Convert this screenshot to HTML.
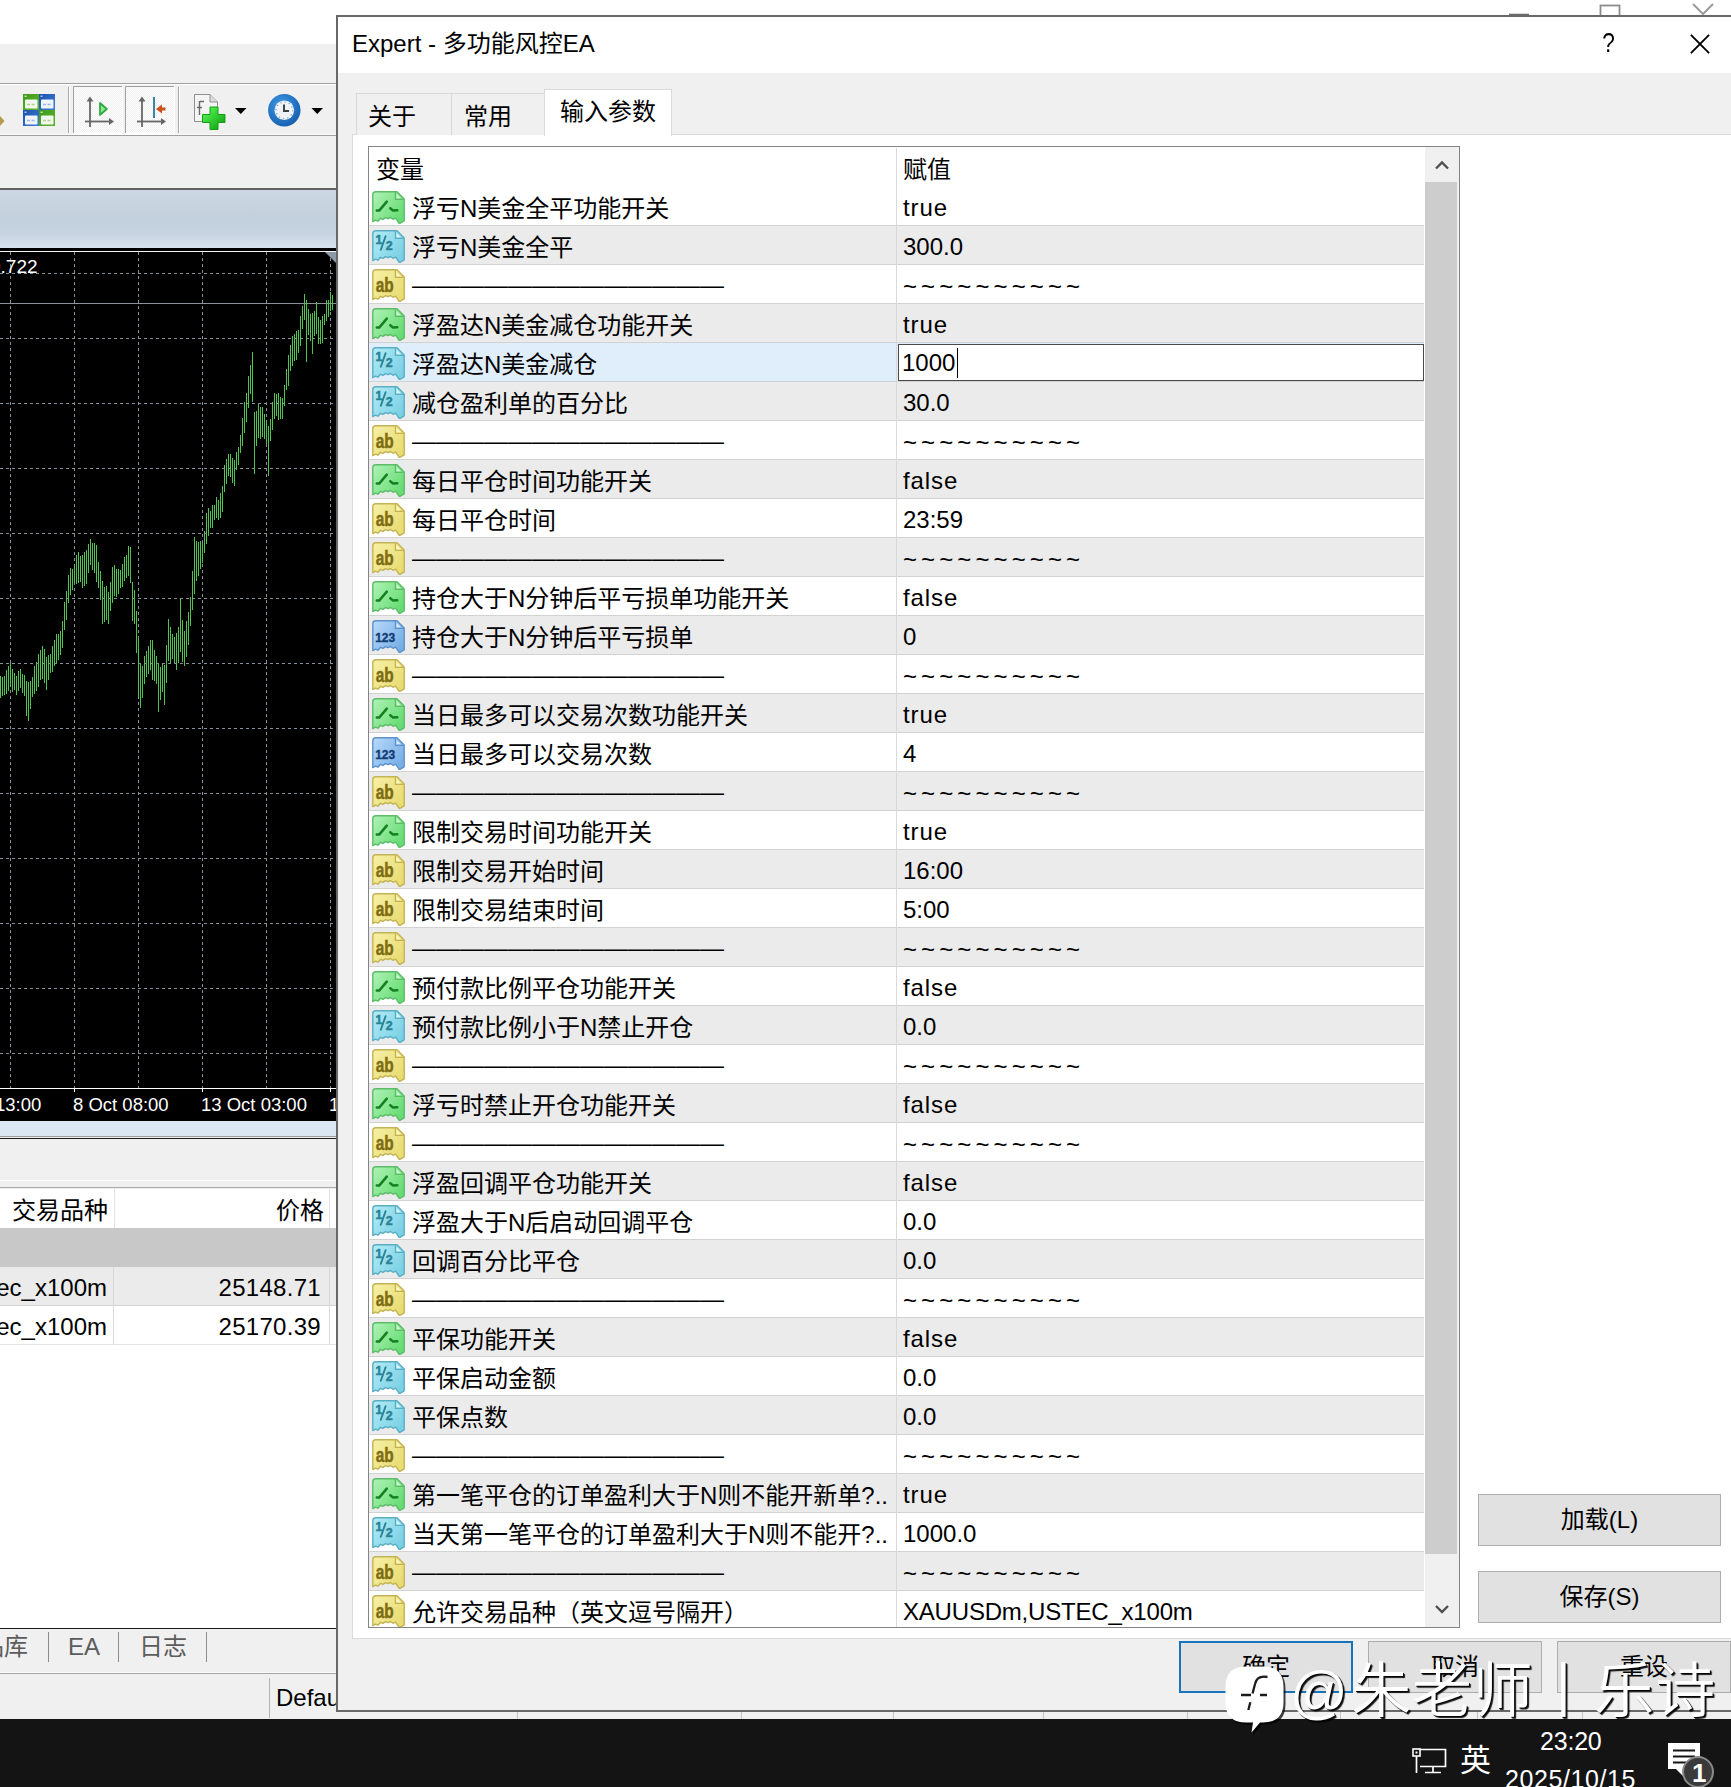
<!DOCTYPE html>
<html lang="zh-CN"><head><meta charset="utf-8"><title>Expert - 多功能风控EA</title>
<style>
html,body{margin:0;padding:0}
body{width:1731px;height:1787px;overflow:hidden;position:relative;background:#fff;font-family:"Liberation Sans","Noto Sans CJK SC",sans-serif;font-size:24px;color:#000;line-height:1}
div,span,svg{position:absolute;box-sizing:border-box}
.t{white-space:nowrap;line-height:36px;height:36px}
/* main window */
#mw-menu{left:0;top:44px;width:340px;height:1680px;background:#f0f0f0}
#tb-top{left:0;top:83px;width:340px;height:1px;background:#a0a0a0}
#tb-top2{left:0;top:84px;width:340px;height:1px;background:#fff}
#tb-bot{left:0;top:135px;width:340px;height:1px;background:#a0a0a0}
#tb-bot2{left:0;top:134px;width:340px;height:1px;background:#fdfdfd}
#ch-frame{left:0;top:188px;width:340px;height:2px;background:#626262}
#ch-cap{left:0;top:190px;width:340px;height:58px;background:linear-gradient(#ccd7e2,#c2d0dd 50%,#c6d3e0 75%,#d9e4ef)}
#chart{left:0;top:248px;width:340px;height:873px;background:#000;border-top:0}
#ch-strip{left:0;top:1121px;width:340px;height:15px;background:#dbe7f3}
#ch-bot{left:0;top:1136px;width:340px;height:3px;background:#f0f0f0;border-top:1px solid #9c9c9c;border-bottom:1px solid #1c1c1c}
#tbl-l1{left:0;top:1180px;width:340px;height:1px;background:#fbfbfb}
#tbl-l2{left:0;top:1187px;width:340px;height:1px;background:#a8a8a8}
#tbl-head{left:0;top:1189px;width:340px;height:39px;background:#fff}
#tbl-band{left:0;top:1228px;width:340px;height:39px;background:#c8c8c8}
#tbl-r1{left:0;top:1267px;width:340px;height:39px;background:#ebebeb;border-bottom:1px solid #d4d4d4}
#tbl-r2{left:0;top:1306px;width:340px;height:39px;background:#fff;border-bottom:1px solid #e4e4e4}
#tbl-rest{left:0;top:1345px;width:340px;height:283px;background:#fff}
#tbl-line{left:0;top:1628px;width:340px;height:1px;background:#1a1a1a}
#st-line{left:0;top:1673px;width:1731px;height:1px;background:#a6a6a6}
#st-line2{left:0;top:1672px;width:1731px;height:1px;background:#fbfbfb}
#status{left:0;top:1674px;width:1731px;height:46px;background:#f0f0f0}
#taskbar{left:0;top:1719px;width:1731px;height:68px;background:#141414;color:#fff}
.vsep{width:1px;background:#8c8c8c}
.gray{color:#5c5c5c}
/* dialog */
#dlg{left:336px;top:15px;width:1420px;height:1697px;background:#f0f0f0;border:2px solid #686868}
#dlg-title{left:0;top:0;width:1416px;height:56px;background:#fff}
#pane{left:14px;top:117px;width:1420px;height:1505px;background:#fff;border:1px solid #d9d9d9}
.tab{height:42px;top:76px;background:#f0f0f0;border:1px solid #d9d9d9;border-bottom:none}
#tab3{top:72px;height:47px;background:#fff;border:1px solid #d9d9d9;border-bottom:none}
#list{left:30px;top:129px;width:1092px;height:1482px;background:#fff;border:1px solid #848484;overflow:hidden}
.row{left:0;width:1055px;height:39px;border-bottom:1px solid #d2d2d2}
.row.g{background:#ebebeb}
.row.s{background:#e0eefb}
.row .n{left:43px;top:4px}
.row .v{left:534px;top:2.5px}
.row .v.tl{top:4px}
.row .w{letter-spacing:.9px}
.row .ic{left:3px;top:3.5px;width:33px;height:33.5px}
.tl{letter-spacing:4.1px}
#colsep{left:527px;top:1px;width:1px;height:1480px;background:#d9d9d9}
#sb{left:1056px;top:0;width:34px;height:1481px;background:#f0f0f0}
#sb-thumb{left:0;top:35px;width:32px;height:1372px;background:#cdcdcd}
.btn{background:#e1e1e1;border:1px solid #adadad;text-align:center;line-height:50px;height:52px;white-space:nowrap}
</style></head><body>

<svg style="left:1500px;top:0;width:231px;height:16px" viewBox="0 0 231 16"><path d="M9 14.5H29" stroke="#6e6e6e" stroke-width="1.6" fill="none"/><rect x="100.5" y="5.5" width="19" height="14" fill="none" stroke="#8c8c8c" stroke-width="1.8"/><path d="M193 4L203 14L213 4" stroke="#9c9c9c" stroke-width="2" fill="none"/></svg>
<div id="mw-menu"></div><div id="tb-top"></div><div id="tb-top2"></div><div id="tb-bot2"></div><div id="tb-bot"></div>
<svg id="toolbar" style="left:0;top:85px;width:340px;height:50px" viewBox="0 85 340 50">
<defs>
<linearGradient id="gg" x1="0" y1="0" x2="1" y2="1"><stop offset="0" stop-color="#3f9a1a"/><stop offset="1" stop-color="#5fb42e"/></linearGradient>
<linearGradient id="gb" x1="0" y1="0" x2="1" y2="1"><stop offset="0" stop-color="#1d4fae"/><stop offset="1" stop-color="#3f7fd6"/></linearGradient>
<radialGradient id="clk" cx="0.4" cy="0.35" r="0.8"><stop offset="0" stop-color="#3f9ae6"/><stop offset="1" stop-color="#0e55a6"/></radialGradient>
<linearGradient id="plus" x1="0" y1="0" x2="1" y2="1"><stop offset="0" stop-color="#5dff5d"/><stop offset="1" stop-color="#0a9a0a"/></linearGradient>
<pattern id="dith" width="2" height="2" patternUnits="userSpaceOnUse"><rect width="2" height="2" fill="#f0f0f0"/><rect width="1" height="1" fill="#fff"/><rect x="1" y="1" width="1" height="1" fill="#fff"/></pattern>
</defs>
<path d="M0 116L4.500 121L0 126Z" fill="#b89a4a"/>
<g>
<rect x="23" y="94" width="16" height="16" fill="url(#gg)"/><rect x="39" y="94" width="16" height="16" fill="url(#gb)"/>
<rect x="23" y="110" width="16" height="16" fill="url(#gb)"/><rect x="39" y="110" width="16" height="16" fill="url(#gg)"/>
<rect x="25" y="99.500" width="12.500" height="9" rx="1" fill="#f2f9ec"/><rect x="41" y="99.500" width="12.500" height="9" rx="1" fill="#eef3fc"/>
<rect x="25" y="115.500" width="12.500" height="9" rx="1" fill="#eef3fc"/><rect x="41" y="115.500" width="12.500" height="9" rx="1" fill="#f2f9ec"/>
<path d="M27 104.500h8.500M43 120.500h8.500" stroke="#a9d492" stroke-width="1.400" stroke-dasharray="3 1.500"/><path d="M43 104.500h8.500M27 120.500h8.500" stroke="#9ab8ea" stroke-width="1.400" stroke-dasharray="3 1.500"/>
<rect x="24.500" y="95.500" width="2" height="1.500" fill="#bfe6a8"/><rect x="40.500" y="95.500" width="2" height="1.500" fill="#a9c4f2"/><rect x="24.500" y="111.500" width="2" height="1.500" fill="#a9c4f2"/><rect x="40.500" y="111.500" width="2" height="1.500" fill="#bfe6a8"/>
</g>
<rect x="68" y="87" width="1" height="46" fill="#a8a8a8"/><rect x="69" y="87" width="1" height="46" fill="#fff"/>
<rect x="73" y="86" width="49" height="47" fill="url(#dith)"/><path d="M73.5 133V86.5H122" stroke="#a0a0a0" fill="none"/><path d="M73.5 133.5H122.5V86.5" stroke="#fff" fill="none"/>
<rect x="125" y="86" width="49" height="47" fill="url(#dith)"/><path d="M125.5 133V86.5H174" stroke="#a0a0a0" fill="none"/><path d="M125.5 133.5H174.5V86.5" stroke="#fff" fill="none"/>
<g stroke="#666" stroke-width="1.8" fill="none"><path d="M90 127V99"/><path d="M85 121.5H111"/></g>
<path d="M90 96.5l-3.5 5h7z M114 121.5l-5-3.5v7z" fill="#666"/>
<path d="M100 103v12l6.8-6z" fill="#8fe696" stroke="#2aa83a" stroke-width="1.7" stroke-linejoin="round"/>
<g stroke="#666" stroke-width="1.8" fill="none"><path d="M142 127V99"/><path d="M137 121.5H163"/></g>
<path d="M142 96.5l-3.5 5h7z M166 121.5l-5-3.5v7z" fill="#666"/>
<rect x="153" y="97" width="2" height="21" fill="#3b86a8"/>
<path d="M156 109l6-4.5v3h3.5v3H162v3z" fill="#c8501a"/>
<rect x="178" y="87" width="1" height="46" fill="#a8a8a8"/><rect x="179" y="87" width="1" height="46" fill="#fff"/>
<path d="M194.500 94.500H210L217.500 102V121.500H194.500Z" fill="#f4f4f4" stroke="#8f8f8f"/><path d="M210 94.500V102H217.500" fill="#dcdcdc" stroke="#8f8f8f"/>
<path d="M200 101.500h4M199.500 101v14M197 107.500h5" stroke="#6a6a6a" stroke-width="1.4" fill="none"/>
<path d="M210 107h8v7.500h7v8h-7v7h-8v-7h-7.500v-8h7.500z" fill="url(#plus)" stroke="#12a012" stroke-width="1"/>
<path d="M235 108h11.500l-5.750 6z" fill="#000"/>
<circle cx="284.300" cy="110.300" r="16.200" fill="url(#clk)"/><circle cx="284.300" cy="110.300" r="9.800" fill="#eef3f9"/>
<circle cx="284.300" cy="110.300" r="8.300" fill="none" stroke="#8ea6c4" stroke-width="1.400" stroke-dasharray="1.200 3.146"/>
<path d="M284 104.500v6.500h5" stroke="#3c3c3c" stroke-width="1.900" fill="none"/>
<path d="M311.500 108h11.500l-5.750 6z" fill="#000"/>
</svg>
<div id="ch-frame"></div><div id="ch-cap"></div><div id="chart"></div>
<svg style="left:0;top:249px;width:337px;height:872px" viewBox="0 249 337 872" shape-rendering="crispEdges"><path d="M0 273.5H336M0 338.5H336M0 403.5H336M0 468.5H336M0 533.5H336M0 598.5H336M0 663.5H336M0 728.5H336M0 793.5H336M0 858.5H336M0 923.5H336M0 988.5H336M0 1053.5H336M10.5 252V1088M74.5 252V1088M138.5 252V1088M202.5 252V1088M266.5 252V1088M330.5 252V1088" stroke="#87919c" stroke-width="1" stroke-dasharray="3 3" fill="none"/><path d="M0 303.500H336" stroke="#8c9197" stroke-width="1" fill="none"/><path d="M0 251.500H336" stroke="#f4f4f4" stroke-width="1" fill="none"/><path d="M0.5 676V698M2.5 677V696M4.5 676V695M6.5 670V694M8.5 666V691M10.5 663V686M12.5 669V692M14.5 673V690M16.5 676V695M18.5 671V691M20.5 669V688M22.5 674V693M24.5 675V696M26.5 681V716M28.5 682V721M30.5 681V709M32.5 677V697M34.5 666V694M36.5 662V691M38.5 654V687M40.5 650V680M42.5 646V679M44.5 649V683M46.5 657V690M48.5 655V680M50.5 654V673M52.5 646V672M54.5 640V666M56.5 634V663M58.5 634V660M60.5 631V655M62.5 621V648M64.5 602V630M66.5 591V620M68.5 575V603M70.5 568V595M72.5 569V590M74.5 565V583M76.5 555V584M78.5 552V583M80.5 556V582M82.5 555V588M84.5 552V586M86.5 550V584M88.5 544V573M90.5 539V565M92.5 543V570M94.5 543V573M96.5 545V582M98.5 562V588M100.5 571V600M102.5 581V624M104.5 587V622M106.5 586V620M108.5 592V624M110.5 582V611M112.5 567V603M114.5 565V596M116.5 569V597M118.5 569V594M120.5 570V588M122.5 564V587M124.5 557V581M126.5 555V578M128.5 546V576M130.5 547V583M132.5 582V621M134.5 590V624M136.5 611V653M138.5 639V699M140.5 664V708M142.5 666V698M144.5 656V684M146.5 651V677M148.5 646V674M150.5 640V670M152.5 640V680M154.5 650V681M156.5 656V684M158.5 664V712M160.5 667V700M162.5 664V692M164.5 665V705M166.5 645V683M168.5 619V661M170.5 627V663M172.5 634V659M174.5 637V663M176.5 633V670M178.5 627V663M180.5 599V652M182.5 620V662M184.5 631V666M186.5 621V657M188.5 612V645M190.5 597V626M192.5 571V610M194.5 537V594M196.5 541V581M198.5 542V576M200.5 541V569M202.5 543V563M204.5 531V553M206.5 513V544M208.5 508V536M210.5 511V528M212.5 505V528M214.5 505V520M216.5 497V518M218.5 500V520M220.5 493V518M222.5 486V512M224.5 465V492M226.5 459V484M228.5 454V476M230.5 454V477M232.5 458V483M234.5 460V486M236.5 452V470M238.5 447V465M240.5 435V453M242.5 418V446M244.5 402V433M246.5 393V422M248.5 376V408M250.5 365V394M252.5 352V402M254.5 412V474M256.5 411V446M258.5 404V438M260.5 407V439M262.5 407V437M264.5 414V439M266.5 420V444M268.5 426V476M270.5 419V441M272.5 402V430M274.5 393V419M276.5 394V416M278.5 393V420M280.5 397V419M282.5 398V419M284.5 385V406M286.5 369V390M288.5 355V386M290.5 345V371M292.5 336V366M294.5 334V361M296.5 331V360M298.5 330V353M300.5 316V346M302.5 306V329M304.5 294V320M306.5 300V362M308.5 309V335M310.5 314V341M312.5 313V354M314.5 311V336M316.5 302V334M318.5 317V344M320.5 320V344M322.5 316V343M324.5 314V325M326.5 300V321M328.5 300V317M330.5 292V311M332.5 295V310" stroke="#4fc44f" stroke-width="1" fill="none"/><path d="M0 1088.500H336M74.500 1088V1092M202.500 1088V1092M330.500 1088V1092" stroke="#fff" stroke-width="1" fill="none"/><path d="M325 252H336V263Z" fill="#8e9aa8" shape-rendering="auto"/><g fill="#fff" font-size="18.500" font-family="'Liberation Sans',sans-serif" shape-rendering="auto"><text x="-10" y="272.500" font-size="19">0.722</text><text x="-5" y="1111">13:00</text><text x="73" y="1111">8 Oct 08:00</text><text x="201" y="1111">13 Oct 03:00</text><text x="329" y="1111">15</text></g></svg>
<div id="ch-strip"></div><div id="ch-bot"></div>
<div id="tbl-l1"></div><div id="tbl-l2"></div><div id="tbl-head"></div><div id="tbl-band"></div><div id="tbl-r1"></div><div id="tbl-r2"></div><div id="tbl-rest"></div><div id="tbl-line"></div>
<div class="vsep" style="left:114px;top:1189px;height:39px;background:#e2e2e2"></div><div class="vsep" style="left:329px;top:1189px;height:39px;background:#e2e2e2"></div><div class="vsep" style="left:113px;top:1267px;height:78px;background:#d8d8d8"></div><div class="vsep" style="left:329px;top:1267px;height:78px;background:#d8d8d8"></div>
<div class="t" style="left:12px;top:1193px">交易品种</div><div class="t" style="left:276px;top:1193px">价格</div>
<div class="t" style="right:1624px;top:1270px">ec_x100m</div><div class="t" style="right:1410px;top:1270px;letter-spacing:.3px">25148.71</div>
<div class="t" style="right:1624px;top:1309px">ec_x100m</div><div class="t" style="right:1410px;top:1309px;letter-spacing:.3px">25170.39</div>
<div class="t gray" style="left:-20px;top:1629px">品库</div><div class="vsep" style="left:48px;top:1632px;height:30px"></div><div class="t gray" style="left:68px;top:1629px">EA</div><div class="vsep" style="left:118px;top:1632px;height:30px"></div><div class="t gray" style="left:139px;top:1629px">日志</div><div class="vsep" style="left:206px;top:1632px;height:30px"></div>
<div id="st-line2"></div><div id="st-line"></div><div id="status"></div><div class="vsep" style="left:269px;top:1678px;height:40px;background:#b4b4b4"></div><div class="t" style="left:276px;top:1680px">Default</div>
<div class="vsep" style="left:517px;top:1712px;height:7px;background:#c4c4c4"></div>
<div class="vsep" style="left:741px;top:1712px;height:7px;background:#c4c4c4"></div>
<div class="vsep" style="left:893px;top:1712px;height:7px;background:#c4c4c4"></div>
<div class="vsep" style="left:1043px;top:1712px;height:7px;background:#c4c4c4"></div>
<div class="vsep" style="left:1187px;top:1712px;height:7px;background:#c4c4c4"></div>
<div class="vsep" style="left:1340px;top:1712px;height:7px;background:#c4c4c4"></div>
<div class="vsep" style="left:1477px;top:1712px;height:7px;background:#c4c4c4"></div>
<div class="vsep" style="left:1582px;top:1712px;height:7px;background:#c4c4c4"></div>
<div id="dlg">
<div id="dlg-title"></div><div class="t" style="left:14px;top:9px">Expert - 多功能风控EA</div>
<div class="t" style="left:1263px;top:8px;font-size:27px;transform:scaleX(.84)">?</div>
<svg style="left:1352px;top:16.5px;width:20px;height:20px" viewBox="0 0 22 22"><path d="M1 1L21 21M21 1L1 21" stroke="#000" stroke-width="2.1" fill="none"/></svg>
<div id="pane"></div>
<div class="tab" style="left:18px;width:96px"></div><div class="tab" style="left:113px;width:94px"></div><div id="tab3" style="left:206px;width:128px"></div>
<div class="t" style="left:30px;top:82px">关于</div><div class="t" style="left:126px;top:82px">常用</div><div class="t" style="left:222px;top:77px">输入参数</div>
<div id="list">
<div class="t" style="left:7px;top:5px">变量</div><div class="t" style="left:534px;top:5px">赋值</div>
<div class="row" style="top:40px"><svg class="ic" viewBox="0 0 33 33.500"><defs><linearGradient id="g0" x1="0" y1="0" x2="1" y2="0.700"><stop offset="0" stop-color="#b0f2b6"/><stop offset="1" stop-color="#66dc74"/></linearGradient></defs><path d="M3.8 .8H25L32.200 8V29.800L27.400 32.700L23.600 27.200L21 28.300L18.500 26.500L16 27.700L13.500 26.600L11 28.400L8.500 27.300L6 30.200L3.500 29.200L.8 30.600V3.800Q.8 .8 3.8 .8Z" fill="url(#g0)" stroke="#5cbc68" stroke-width="1.400" stroke-linejoin="round"/><path d="M23.400 1V8.400H32" fill="none" stroke="#5cbc68" stroke-width="1.200"/><path d="M24.600 3V7.300H28.800Z" fill="#d2f8d4"/><path d="M4.800 19.600H7.200L14.800 10.600M18.300 17.200L20.800 19.400L25.300 19.200" stroke="#14801f" stroke-width="2.500" fill="none" stroke-linecap="round" stroke-linejoin="round"/></svg><div class="t n">浮亏N美金全平功能开关</div><div class="t v w">true</div></div>
<div class="row g" style="top:79px"><svg class="ic" viewBox="0 0 33 33.500"><defs><linearGradient id="g1" x1="0" y1="0" x2="1" y2="0.700"><stop offset="0" stop-color="#b4ecf6"/><stop offset="1" stop-color="#7ad0e4"/></linearGradient></defs><path d="M3.8 .8H25L32.200 8V29.800L27.400 32.700L23.600 27.200L21 28.300L18.500 26.500L16 27.700L13.500 26.600L11 28.400L8.500 27.300L6 30.200L3.500 29.200L.8 30.600V3.800Q.8 .8 3.8 .8Z" fill="url(#g1)" stroke="#5aaec4" stroke-width="1.400" stroke-linejoin="round"/><path d="M23.400 1V8.400H32" fill="none" stroke="#5aaec4" stroke-width="1.200"/><path d="M24.600 3V7.300H28.800Z" fill="#dcf6fa"/><text font-size="12" font-weight="bold" fill="#2a8296" stroke="#2a8296" stroke-width=".5" font-family="'Liberation Sans',sans-serif"><tspan x="3.600" y="14.300">1</tspan><tspan x="13.800" y="20.200" font-size="12.400">2</tspan></text><path d="M13.600 6.200L8.800 19.800" stroke="#2a8296" stroke-width="1.900" stroke-linecap="round"/></svg><div class="t n">浮亏N美金全平</div><div class="t v">300.0</div></div>
<div class="row" style="top:118px"><svg class="ic" viewBox="0 0 33 33.500"><defs><linearGradient id="g2" x1="0" y1="0" x2="1" y2="0.700"><stop offset="0" stop-color="#f7f0a8"/><stop offset="1" stop-color="#e9dc72"/></linearGradient></defs><path d="M3.8 .8H25L32.200 8V29.800L27.400 32.700L23.600 27.200L21 28.300L18.500 26.500L16 27.700L13.500 26.600L11 28.400L8.500 27.300L6 30.200L3.500 29.200L.8 30.600V3.800Q.8 .8 3.8 .8Z" fill="url(#g2)" stroke="#c4b352" stroke-width="1.400" stroke-linejoin="round"/><path d="M23.400 1V8.400H32" fill="none" stroke="#c4b352" stroke-width="1.200"/><path d="M24.600 3V7.300H28.800Z" fill="#fbf6cc"/><text x="3.800" y="22.600" font-size="20" font-weight="bold" fill="#7d6c12" stroke="#7d6c12" stroke-width=".45" font-family="'Liberation Sans',sans-serif" textLength="18" lengthAdjust="spacingAndGlyphs">ab</text></svg><div class="t n"><span style="position:relative;top:-2px">—————————————</span></div><div class="t v tl">~~~~~~~~~~</div></div>
<div class="row g" style="top:157px"><svg class="ic" viewBox="0 0 33 33.500"><defs><linearGradient id="g3" x1="0" y1="0" x2="1" y2="0.700"><stop offset="0" stop-color="#b0f2b6"/><stop offset="1" stop-color="#66dc74"/></linearGradient></defs><path d="M3.8 .8H25L32.200 8V29.800L27.400 32.700L23.600 27.200L21 28.300L18.500 26.500L16 27.700L13.500 26.600L11 28.400L8.500 27.300L6 30.200L3.500 29.200L.8 30.600V3.800Q.8 .8 3.8 .8Z" fill="url(#g3)" stroke="#5cbc68" stroke-width="1.400" stroke-linejoin="round"/><path d="M23.400 1V8.400H32" fill="none" stroke="#5cbc68" stroke-width="1.200"/><path d="M24.600 3V7.300H28.800Z" fill="#d2f8d4"/><path d="M4.800 19.600H7.200L14.800 10.600M18.300 17.200L20.800 19.400L25.300 19.200" stroke="#14801f" stroke-width="2.500" fill="none" stroke-linecap="round" stroke-linejoin="round"/></svg><div class="t n">浮盈达N美金减仓功能开关</div><div class="t v w">true</div></div>
<div class="row s" style="top:196px"><svg class="ic" viewBox="0 0 33 33.500"><defs><linearGradient id="g4" x1="0" y1="0" x2="1" y2="0.700"><stop offset="0" stop-color="#b4ecf6"/><stop offset="1" stop-color="#7ad0e4"/></linearGradient></defs><path d="M3.8 .8H25L32.200 8V29.800L27.400 32.700L23.600 27.200L21 28.300L18.500 26.500L16 27.700L13.500 26.600L11 28.400L8.500 27.300L6 30.200L3.500 29.200L.8 30.600V3.800Q.8 .8 3.8 .8Z" fill="url(#g4)" stroke="#5aaec4" stroke-width="1.400" stroke-linejoin="round"/><path d="M23.400 1V8.400H32" fill="none" stroke="#5aaec4" stroke-width="1.200"/><path d="M24.600 3V7.300H28.800Z" fill="#dcf6fa"/><text font-size="12" font-weight="bold" fill="#2a8296" stroke="#2a8296" stroke-width=".5" font-family="'Liberation Sans',sans-serif"><tspan x="3.600" y="14.300">1</tspan><tspan x="13.800" y="20.200" font-size="12.400">2</tspan></text><path d="M13.600 6.200L8.800 19.800" stroke="#2a8296" stroke-width="1.900" stroke-linecap="round"/></svg><div class="t n">浮盈达N美金减仓</div><div style="left:529px;top:1px;width:526px;height:37px;background:#fff;border:1px solid #4a4a4a"></div><div class="t" style="left:533px;top:1.5px">1000</div><div style="left:588px;top:5px;width:1px;height:30px;background:#000"></div></div>
<div class="row g" style="top:235px"><svg class="ic" viewBox="0 0 33 33.500"><defs><linearGradient id="g5" x1="0" y1="0" x2="1" y2="0.700"><stop offset="0" stop-color="#b4ecf6"/><stop offset="1" stop-color="#7ad0e4"/></linearGradient></defs><path d="M3.8 .8H25L32.200 8V29.800L27.400 32.700L23.600 27.200L21 28.300L18.500 26.500L16 27.700L13.500 26.600L11 28.400L8.500 27.300L6 30.200L3.500 29.200L.8 30.600V3.800Q.8 .8 3.8 .8Z" fill="url(#g5)" stroke="#5aaec4" stroke-width="1.400" stroke-linejoin="round"/><path d="M23.400 1V8.400H32" fill="none" stroke="#5aaec4" stroke-width="1.200"/><path d="M24.600 3V7.300H28.800Z" fill="#dcf6fa"/><text font-size="12" font-weight="bold" fill="#2a8296" stroke="#2a8296" stroke-width=".5" font-family="'Liberation Sans',sans-serif"><tspan x="3.600" y="14.300">1</tspan><tspan x="13.800" y="20.200" font-size="12.400">2</tspan></text><path d="M13.600 6.200L8.800 19.800" stroke="#2a8296" stroke-width="1.900" stroke-linecap="round"/></svg><div class="t n">减仓盈利单的百分比</div><div class="t v">30.0</div></div>
<div class="row" style="top:274px"><svg class="ic" viewBox="0 0 33 33.500"><defs><linearGradient id="g6" x1="0" y1="0" x2="1" y2="0.700"><stop offset="0" stop-color="#f7f0a8"/><stop offset="1" stop-color="#e9dc72"/></linearGradient></defs><path d="M3.8 .8H25L32.200 8V29.800L27.400 32.700L23.600 27.200L21 28.300L18.500 26.500L16 27.700L13.500 26.600L11 28.400L8.500 27.300L6 30.200L3.500 29.200L.8 30.600V3.800Q.8 .8 3.8 .8Z" fill="url(#g6)" stroke="#c4b352" stroke-width="1.400" stroke-linejoin="round"/><path d="M23.400 1V8.400H32" fill="none" stroke="#c4b352" stroke-width="1.200"/><path d="M24.600 3V7.300H28.800Z" fill="#fbf6cc"/><text x="3.800" y="22.600" font-size="20" font-weight="bold" fill="#7d6c12" stroke="#7d6c12" stroke-width=".45" font-family="'Liberation Sans',sans-serif" textLength="18" lengthAdjust="spacingAndGlyphs">ab</text></svg><div class="t n"><span style="position:relative;top:-2px">—————————————</span></div><div class="t v tl">~~~~~~~~~~</div></div>
<div class="row g" style="top:313px"><svg class="ic" viewBox="0 0 33 33.500"><defs><linearGradient id="g7" x1="0" y1="0" x2="1" y2="0.700"><stop offset="0" stop-color="#b0f2b6"/><stop offset="1" stop-color="#66dc74"/></linearGradient></defs><path d="M3.8 .8H25L32.200 8V29.800L27.400 32.700L23.600 27.200L21 28.300L18.500 26.500L16 27.700L13.500 26.600L11 28.400L8.500 27.300L6 30.200L3.500 29.200L.8 30.600V3.800Q.8 .8 3.8 .8Z" fill="url(#g7)" stroke="#5cbc68" stroke-width="1.400" stroke-linejoin="round"/><path d="M23.400 1V8.400H32" fill="none" stroke="#5cbc68" stroke-width="1.200"/><path d="M24.600 3V7.300H28.800Z" fill="#d2f8d4"/><path d="M4.800 19.600H7.200L14.800 10.600M18.300 17.200L20.800 19.400L25.300 19.200" stroke="#14801f" stroke-width="2.500" fill="none" stroke-linecap="round" stroke-linejoin="round"/></svg><div class="t n">每日平仓时间功能开关</div><div class="t v w">false</div></div>
<div class="row" style="top:352px"><svg class="ic" viewBox="0 0 33 33.500"><defs><linearGradient id="g8" x1="0" y1="0" x2="1" y2="0.700"><stop offset="0" stop-color="#f7f0a8"/><stop offset="1" stop-color="#e9dc72"/></linearGradient></defs><path d="M3.8 .8H25L32.200 8V29.800L27.400 32.700L23.600 27.200L21 28.300L18.500 26.500L16 27.700L13.500 26.600L11 28.400L8.500 27.300L6 30.200L3.500 29.200L.8 30.600V3.800Q.8 .8 3.8 .8Z" fill="url(#g8)" stroke="#c4b352" stroke-width="1.400" stroke-linejoin="round"/><path d="M23.400 1V8.400H32" fill="none" stroke="#c4b352" stroke-width="1.200"/><path d="M24.600 3V7.300H28.800Z" fill="#fbf6cc"/><text x="3.800" y="22.600" font-size="20" font-weight="bold" fill="#7d6c12" stroke="#7d6c12" stroke-width=".45" font-family="'Liberation Sans',sans-serif" textLength="18" lengthAdjust="spacingAndGlyphs">ab</text></svg><div class="t n">每日平仓时间</div><div class="t v">23:59</div></div>
<div class="row g" style="top:391px"><svg class="ic" viewBox="0 0 33 33.500"><defs><linearGradient id="g9" x1="0" y1="0" x2="1" y2="0.700"><stop offset="0" stop-color="#f7f0a8"/><stop offset="1" stop-color="#e9dc72"/></linearGradient></defs><path d="M3.8 .8H25L32.200 8V29.800L27.400 32.700L23.600 27.200L21 28.300L18.500 26.500L16 27.700L13.500 26.600L11 28.400L8.500 27.300L6 30.200L3.500 29.200L.8 30.600V3.800Q.8 .8 3.8 .8Z" fill="url(#g9)" stroke="#c4b352" stroke-width="1.400" stroke-linejoin="round"/><path d="M23.400 1V8.400H32" fill="none" stroke="#c4b352" stroke-width="1.200"/><path d="M24.600 3V7.300H28.800Z" fill="#fbf6cc"/><text x="3.800" y="22.600" font-size="20" font-weight="bold" fill="#7d6c12" stroke="#7d6c12" stroke-width=".45" font-family="'Liberation Sans',sans-serif" textLength="18" lengthAdjust="spacingAndGlyphs">ab</text></svg><div class="t n"><span style="position:relative;top:-2px">—————————————</span></div><div class="t v tl">~~~~~~~~~~</div></div>
<div class="row" style="top:430px"><svg class="ic" viewBox="0 0 33 33.500"><defs><linearGradient id="g10" x1="0" y1="0" x2="1" y2="0.700"><stop offset="0" stop-color="#b0f2b6"/><stop offset="1" stop-color="#66dc74"/></linearGradient></defs><path d="M3.8 .8H25L32.200 8V29.800L27.400 32.700L23.600 27.200L21 28.300L18.500 26.500L16 27.700L13.500 26.600L11 28.400L8.500 27.300L6 30.200L3.500 29.200L.8 30.600V3.800Q.8 .8 3.8 .8Z" fill="url(#g10)" stroke="#5cbc68" stroke-width="1.400" stroke-linejoin="round"/><path d="M23.400 1V8.400H32" fill="none" stroke="#5cbc68" stroke-width="1.200"/><path d="M24.600 3V7.300H28.800Z" fill="#d2f8d4"/><path d="M4.800 19.600H7.200L14.800 10.600M18.300 17.200L20.800 19.400L25.300 19.200" stroke="#14801f" stroke-width="2.500" fill="none" stroke-linecap="round" stroke-linejoin="round"/></svg><div class="t n">持仓大于N分钟后平亏损单功能开关</div><div class="t v w">false</div></div>
<div class="row g" style="top:469px"><svg class="ic" viewBox="0 0 33 33.500"><defs><linearGradient id="g11" x1="0" y1="0" x2="1" y2="0.700"><stop offset="0" stop-color="#b8dafa"/><stop offset="1" stop-color="#78aee6"/></linearGradient></defs><path d="M3.8 .8H25L32.200 8V29.800L27.400 32.700L23.600 27.200L21 28.300L18.500 26.500L16 27.700L13.500 26.600L11 28.400L8.500 27.300L6 30.200L3.500 29.200L.8 30.600V3.800Q.8 .8 3.8 .8Z" fill="url(#g11)" stroke="#5c92cc" stroke-width="1.400" stroke-linejoin="round"/><path d="M23.400 1V8.400H32" fill="none" stroke="#5c92cc" stroke-width="1.200"/><path d="M24.600 3V7.300H28.800Z" fill="#dcecfc"/><text x="3.200" y="22.400" font-size="13.500" font-weight="bold" fill="#143c74" stroke="#143c74" stroke-width=".4" font-family="'Liberation Sans',sans-serif" textLength="20" lengthAdjust="spacingAndGlyphs">123</text></svg><div class="t n">持仓大于N分钟后平亏损单</div><div class="t v">0</div></div>
<div class="row" style="top:508px"><svg class="ic" viewBox="0 0 33 33.500"><defs><linearGradient id="g12" x1="0" y1="0" x2="1" y2="0.700"><stop offset="0" stop-color="#f7f0a8"/><stop offset="1" stop-color="#e9dc72"/></linearGradient></defs><path d="M3.8 .8H25L32.200 8V29.800L27.400 32.700L23.600 27.200L21 28.300L18.500 26.500L16 27.700L13.500 26.600L11 28.400L8.500 27.300L6 30.200L3.500 29.200L.8 30.600V3.800Q.8 .8 3.8 .8Z" fill="url(#g12)" stroke="#c4b352" stroke-width="1.400" stroke-linejoin="round"/><path d="M23.400 1V8.400H32" fill="none" stroke="#c4b352" stroke-width="1.200"/><path d="M24.600 3V7.300H28.800Z" fill="#fbf6cc"/><text x="3.800" y="22.600" font-size="20" font-weight="bold" fill="#7d6c12" stroke="#7d6c12" stroke-width=".45" font-family="'Liberation Sans',sans-serif" textLength="18" lengthAdjust="spacingAndGlyphs">ab</text></svg><div class="t n"><span style="position:relative;top:-2px">—————————————</span></div><div class="t v tl">~~~~~~~~~~</div></div>
<div class="row g" style="top:547px"><svg class="ic" viewBox="0 0 33 33.500"><defs><linearGradient id="g13" x1="0" y1="0" x2="1" y2="0.700"><stop offset="0" stop-color="#b0f2b6"/><stop offset="1" stop-color="#66dc74"/></linearGradient></defs><path d="M3.8 .8H25L32.200 8V29.800L27.400 32.700L23.600 27.200L21 28.300L18.500 26.500L16 27.700L13.500 26.600L11 28.400L8.500 27.300L6 30.200L3.500 29.200L.8 30.600V3.800Q.8 .8 3.8 .8Z" fill="url(#g13)" stroke="#5cbc68" stroke-width="1.400" stroke-linejoin="round"/><path d="M23.400 1V8.400H32" fill="none" stroke="#5cbc68" stroke-width="1.200"/><path d="M24.600 3V7.300H28.800Z" fill="#d2f8d4"/><path d="M4.800 19.600H7.200L14.800 10.600M18.300 17.200L20.800 19.400L25.300 19.200" stroke="#14801f" stroke-width="2.500" fill="none" stroke-linecap="round" stroke-linejoin="round"/></svg><div class="t n">当日最多可以交易次数功能开关</div><div class="t v w">true</div></div>
<div class="row" style="top:586px"><svg class="ic" viewBox="0 0 33 33.500"><defs><linearGradient id="g14" x1="0" y1="0" x2="1" y2="0.700"><stop offset="0" stop-color="#b8dafa"/><stop offset="1" stop-color="#78aee6"/></linearGradient></defs><path d="M3.8 .8H25L32.200 8V29.800L27.400 32.700L23.600 27.200L21 28.300L18.500 26.500L16 27.700L13.500 26.600L11 28.400L8.500 27.300L6 30.200L3.500 29.200L.8 30.600V3.800Q.8 .8 3.8 .8Z" fill="url(#g14)" stroke="#5c92cc" stroke-width="1.400" stroke-linejoin="round"/><path d="M23.400 1V8.400H32" fill="none" stroke="#5c92cc" stroke-width="1.200"/><path d="M24.600 3V7.300H28.800Z" fill="#dcecfc"/><text x="3.200" y="22.400" font-size="13.500" font-weight="bold" fill="#143c74" stroke="#143c74" stroke-width=".4" font-family="'Liberation Sans',sans-serif" textLength="20" lengthAdjust="spacingAndGlyphs">123</text></svg><div class="t n">当日最多可以交易次数</div><div class="t v">4</div></div>
<div class="row g" style="top:625px"><svg class="ic" viewBox="0 0 33 33.500"><defs><linearGradient id="g15" x1="0" y1="0" x2="1" y2="0.700"><stop offset="0" stop-color="#f7f0a8"/><stop offset="1" stop-color="#e9dc72"/></linearGradient></defs><path d="M3.8 .8H25L32.200 8V29.800L27.400 32.700L23.600 27.200L21 28.300L18.500 26.500L16 27.700L13.500 26.600L11 28.400L8.500 27.300L6 30.200L3.500 29.200L.8 30.600V3.800Q.8 .8 3.8 .8Z" fill="url(#g15)" stroke="#c4b352" stroke-width="1.400" stroke-linejoin="round"/><path d="M23.400 1V8.400H32" fill="none" stroke="#c4b352" stroke-width="1.200"/><path d="M24.600 3V7.300H28.800Z" fill="#fbf6cc"/><text x="3.800" y="22.600" font-size="20" font-weight="bold" fill="#7d6c12" stroke="#7d6c12" stroke-width=".45" font-family="'Liberation Sans',sans-serif" textLength="18" lengthAdjust="spacingAndGlyphs">ab</text></svg><div class="t n"><span style="position:relative;top:-2px">—————————————</span></div><div class="t v tl">~~~~~~~~~~</div></div>
<div class="row" style="top:664px"><svg class="ic" viewBox="0 0 33 33.500"><defs><linearGradient id="g16" x1="0" y1="0" x2="1" y2="0.700"><stop offset="0" stop-color="#b0f2b6"/><stop offset="1" stop-color="#66dc74"/></linearGradient></defs><path d="M3.8 .8H25L32.200 8V29.800L27.400 32.700L23.600 27.200L21 28.300L18.500 26.500L16 27.700L13.500 26.600L11 28.400L8.500 27.300L6 30.200L3.500 29.200L.8 30.600V3.800Q.8 .8 3.8 .8Z" fill="url(#g16)" stroke="#5cbc68" stroke-width="1.400" stroke-linejoin="round"/><path d="M23.400 1V8.400H32" fill="none" stroke="#5cbc68" stroke-width="1.200"/><path d="M24.600 3V7.300H28.800Z" fill="#d2f8d4"/><path d="M4.800 19.600H7.200L14.800 10.600M18.300 17.200L20.800 19.400L25.300 19.200" stroke="#14801f" stroke-width="2.500" fill="none" stroke-linecap="round" stroke-linejoin="round"/></svg><div class="t n">限制交易时间功能开关</div><div class="t v w">true</div></div>
<div class="row g" style="top:703px"><svg class="ic" viewBox="0 0 33 33.500"><defs><linearGradient id="g17" x1="0" y1="0" x2="1" y2="0.700"><stop offset="0" stop-color="#f7f0a8"/><stop offset="1" stop-color="#e9dc72"/></linearGradient></defs><path d="M3.8 .8H25L32.200 8V29.800L27.400 32.700L23.600 27.200L21 28.300L18.500 26.500L16 27.700L13.500 26.600L11 28.400L8.500 27.300L6 30.200L3.500 29.200L.8 30.600V3.800Q.8 .8 3.8 .8Z" fill="url(#g17)" stroke="#c4b352" stroke-width="1.400" stroke-linejoin="round"/><path d="M23.400 1V8.400H32" fill="none" stroke="#c4b352" stroke-width="1.200"/><path d="M24.600 3V7.300H28.800Z" fill="#fbf6cc"/><text x="3.800" y="22.600" font-size="20" font-weight="bold" fill="#7d6c12" stroke="#7d6c12" stroke-width=".45" font-family="'Liberation Sans',sans-serif" textLength="18" lengthAdjust="spacingAndGlyphs">ab</text></svg><div class="t n">限制交易开始时间</div><div class="t v">16:00</div></div>
<div class="row" style="top:742px"><svg class="ic" viewBox="0 0 33 33.500"><defs><linearGradient id="g18" x1="0" y1="0" x2="1" y2="0.700"><stop offset="0" stop-color="#f7f0a8"/><stop offset="1" stop-color="#e9dc72"/></linearGradient></defs><path d="M3.8 .8H25L32.200 8V29.800L27.400 32.700L23.600 27.200L21 28.300L18.500 26.500L16 27.700L13.500 26.600L11 28.400L8.500 27.300L6 30.200L3.500 29.200L.8 30.600V3.800Q.8 .8 3.8 .8Z" fill="url(#g18)" stroke="#c4b352" stroke-width="1.400" stroke-linejoin="round"/><path d="M23.400 1V8.400H32" fill="none" stroke="#c4b352" stroke-width="1.200"/><path d="M24.600 3V7.300H28.800Z" fill="#fbf6cc"/><text x="3.800" y="22.600" font-size="20" font-weight="bold" fill="#7d6c12" stroke="#7d6c12" stroke-width=".45" font-family="'Liberation Sans',sans-serif" textLength="18" lengthAdjust="spacingAndGlyphs">ab</text></svg><div class="t n">限制交易结束时间</div><div class="t v">5:00</div></div>
<div class="row g" style="top:781px"><svg class="ic" viewBox="0 0 33 33.500"><defs><linearGradient id="g19" x1="0" y1="0" x2="1" y2="0.700"><stop offset="0" stop-color="#f7f0a8"/><stop offset="1" stop-color="#e9dc72"/></linearGradient></defs><path d="M3.8 .8H25L32.200 8V29.800L27.400 32.700L23.600 27.200L21 28.300L18.500 26.500L16 27.700L13.500 26.600L11 28.400L8.500 27.300L6 30.200L3.500 29.200L.8 30.600V3.800Q.8 .8 3.8 .8Z" fill="url(#g19)" stroke="#c4b352" stroke-width="1.400" stroke-linejoin="round"/><path d="M23.400 1V8.400H32" fill="none" stroke="#c4b352" stroke-width="1.200"/><path d="M24.600 3V7.300H28.800Z" fill="#fbf6cc"/><text x="3.800" y="22.600" font-size="20" font-weight="bold" fill="#7d6c12" stroke="#7d6c12" stroke-width=".45" font-family="'Liberation Sans',sans-serif" textLength="18" lengthAdjust="spacingAndGlyphs">ab</text></svg><div class="t n"><span style="position:relative;top:-2px">—————————————</span></div><div class="t v tl">~~~~~~~~~~</div></div>
<div class="row" style="top:820px"><svg class="ic" viewBox="0 0 33 33.500"><defs><linearGradient id="g20" x1="0" y1="0" x2="1" y2="0.700"><stop offset="0" stop-color="#b0f2b6"/><stop offset="1" stop-color="#66dc74"/></linearGradient></defs><path d="M3.8 .8H25L32.200 8V29.800L27.400 32.700L23.600 27.200L21 28.300L18.500 26.500L16 27.700L13.500 26.600L11 28.400L8.500 27.300L6 30.200L3.500 29.200L.8 30.600V3.800Q.8 .8 3.8 .8Z" fill="url(#g20)" stroke="#5cbc68" stroke-width="1.400" stroke-linejoin="round"/><path d="M23.400 1V8.400H32" fill="none" stroke="#5cbc68" stroke-width="1.200"/><path d="M24.600 3V7.300H28.800Z" fill="#d2f8d4"/><path d="M4.800 19.600H7.200L14.800 10.600M18.300 17.200L20.800 19.400L25.300 19.200" stroke="#14801f" stroke-width="2.500" fill="none" stroke-linecap="round" stroke-linejoin="round"/></svg><div class="t n">预付款比例平仓功能开关</div><div class="t v w">false</div></div>
<div class="row g" style="top:859px"><svg class="ic" viewBox="0 0 33 33.500"><defs><linearGradient id="g21" x1="0" y1="0" x2="1" y2="0.700"><stop offset="0" stop-color="#b4ecf6"/><stop offset="1" stop-color="#7ad0e4"/></linearGradient></defs><path d="M3.8 .8H25L32.200 8V29.800L27.400 32.700L23.600 27.200L21 28.300L18.500 26.500L16 27.700L13.500 26.600L11 28.400L8.500 27.300L6 30.200L3.500 29.200L.8 30.600V3.800Q.8 .8 3.8 .8Z" fill="url(#g21)" stroke="#5aaec4" stroke-width="1.400" stroke-linejoin="round"/><path d="M23.400 1V8.400H32" fill="none" stroke="#5aaec4" stroke-width="1.200"/><path d="M24.600 3V7.300H28.800Z" fill="#dcf6fa"/><text font-size="12" font-weight="bold" fill="#2a8296" stroke="#2a8296" stroke-width=".5" font-family="'Liberation Sans',sans-serif"><tspan x="3.600" y="14.300">1</tspan><tspan x="13.800" y="20.200" font-size="12.400">2</tspan></text><path d="M13.600 6.200L8.800 19.800" stroke="#2a8296" stroke-width="1.900" stroke-linecap="round"/></svg><div class="t n">预付款比例小于N禁止开仓</div><div class="t v">0.0</div></div>
<div class="row" style="top:898px"><svg class="ic" viewBox="0 0 33 33.500"><defs><linearGradient id="g22" x1="0" y1="0" x2="1" y2="0.700"><stop offset="0" stop-color="#f7f0a8"/><stop offset="1" stop-color="#e9dc72"/></linearGradient></defs><path d="M3.8 .8H25L32.200 8V29.800L27.400 32.700L23.600 27.200L21 28.300L18.500 26.500L16 27.700L13.500 26.600L11 28.400L8.500 27.300L6 30.200L3.500 29.200L.8 30.600V3.800Q.8 .8 3.8 .8Z" fill="url(#g22)" stroke="#c4b352" stroke-width="1.400" stroke-linejoin="round"/><path d="M23.400 1V8.400H32" fill="none" stroke="#c4b352" stroke-width="1.200"/><path d="M24.600 3V7.300H28.800Z" fill="#fbf6cc"/><text x="3.800" y="22.600" font-size="20" font-weight="bold" fill="#7d6c12" stroke="#7d6c12" stroke-width=".45" font-family="'Liberation Sans',sans-serif" textLength="18" lengthAdjust="spacingAndGlyphs">ab</text></svg><div class="t n"><span style="position:relative;top:-2px">—————————————</span></div><div class="t v tl">~~~~~~~~~~</div></div>
<div class="row g" style="top:937px"><svg class="ic" viewBox="0 0 33 33.500"><defs><linearGradient id="g23" x1="0" y1="0" x2="1" y2="0.700"><stop offset="0" stop-color="#b0f2b6"/><stop offset="1" stop-color="#66dc74"/></linearGradient></defs><path d="M3.8 .8H25L32.200 8V29.800L27.400 32.700L23.600 27.200L21 28.300L18.500 26.500L16 27.700L13.500 26.600L11 28.400L8.500 27.300L6 30.200L3.500 29.200L.8 30.600V3.800Q.8 .8 3.8 .8Z" fill="url(#g23)" stroke="#5cbc68" stroke-width="1.400" stroke-linejoin="round"/><path d="M23.400 1V8.400H32" fill="none" stroke="#5cbc68" stroke-width="1.200"/><path d="M24.600 3V7.300H28.800Z" fill="#d2f8d4"/><path d="M4.800 19.600H7.200L14.800 10.600M18.300 17.200L20.800 19.400L25.300 19.200" stroke="#14801f" stroke-width="2.500" fill="none" stroke-linecap="round" stroke-linejoin="round"/></svg><div class="t n">浮亏时禁止开仓功能开关</div><div class="t v w">false</div></div>
<div class="row" style="top:976px"><svg class="ic" viewBox="0 0 33 33.500"><defs><linearGradient id="g24" x1="0" y1="0" x2="1" y2="0.700"><stop offset="0" stop-color="#f7f0a8"/><stop offset="1" stop-color="#e9dc72"/></linearGradient></defs><path d="M3.8 .8H25L32.200 8V29.800L27.400 32.700L23.600 27.200L21 28.300L18.500 26.500L16 27.700L13.500 26.600L11 28.400L8.500 27.300L6 30.200L3.500 29.200L.8 30.600V3.800Q.8 .8 3.8 .8Z" fill="url(#g24)" stroke="#c4b352" stroke-width="1.400" stroke-linejoin="round"/><path d="M23.400 1V8.400H32" fill="none" stroke="#c4b352" stroke-width="1.200"/><path d="M24.600 3V7.300H28.800Z" fill="#fbf6cc"/><text x="3.800" y="22.600" font-size="20" font-weight="bold" fill="#7d6c12" stroke="#7d6c12" stroke-width=".45" font-family="'Liberation Sans',sans-serif" textLength="18" lengthAdjust="spacingAndGlyphs">ab</text></svg><div class="t n"><span style="position:relative;top:-2px">—————————————</span></div><div class="t v tl">~~~~~~~~~~</div></div>
<div class="row g" style="top:1015px"><svg class="ic" viewBox="0 0 33 33.500"><defs><linearGradient id="g25" x1="0" y1="0" x2="1" y2="0.700"><stop offset="0" stop-color="#b0f2b6"/><stop offset="1" stop-color="#66dc74"/></linearGradient></defs><path d="M3.8 .8H25L32.200 8V29.800L27.400 32.700L23.600 27.200L21 28.300L18.500 26.500L16 27.700L13.500 26.600L11 28.400L8.500 27.300L6 30.200L3.500 29.200L.8 30.600V3.800Q.8 .8 3.8 .8Z" fill="url(#g25)" stroke="#5cbc68" stroke-width="1.400" stroke-linejoin="round"/><path d="M23.400 1V8.400H32" fill="none" stroke="#5cbc68" stroke-width="1.200"/><path d="M24.600 3V7.300H28.800Z" fill="#d2f8d4"/><path d="M4.800 19.600H7.200L14.800 10.600M18.300 17.200L20.800 19.400L25.300 19.200" stroke="#14801f" stroke-width="2.500" fill="none" stroke-linecap="round" stroke-linejoin="round"/></svg><div class="t n">浮盈回调平仓功能开关</div><div class="t v w">false</div></div>
<div class="row" style="top:1054px"><svg class="ic" viewBox="0 0 33 33.500"><defs><linearGradient id="g26" x1="0" y1="0" x2="1" y2="0.700"><stop offset="0" stop-color="#b4ecf6"/><stop offset="1" stop-color="#7ad0e4"/></linearGradient></defs><path d="M3.8 .8H25L32.200 8V29.800L27.400 32.700L23.600 27.200L21 28.300L18.500 26.500L16 27.700L13.500 26.600L11 28.400L8.500 27.300L6 30.200L3.500 29.200L.8 30.600V3.800Q.8 .8 3.8 .8Z" fill="url(#g26)" stroke="#5aaec4" stroke-width="1.400" stroke-linejoin="round"/><path d="M23.400 1V8.400H32" fill="none" stroke="#5aaec4" stroke-width="1.200"/><path d="M24.600 3V7.300H28.800Z" fill="#dcf6fa"/><text font-size="12" font-weight="bold" fill="#2a8296" stroke="#2a8296" stroke-width=".5" font-family="'Liberation Sans',sans-serif"><tspan x="3.600" y="14.300">1</tspan><tspan x="13.800" y="20.200" font-size="12.400">2</tspan></text><path d="M13.600 6.200L8.800 19.800" stroke="#2a8296" stroke-width="1.900" stroke-linecap="round"/></svg><div class="t n">浮盈大于N后启动回调平仓</div><div class="t v">0.0</div></div>
<div class="row g" style="top:1093px"><svg class="ic" viewBox="0 0 33 33.500"><defs><linearGradient id="g27" x1="0" y1="0" x2="1" y2="0.700"><stop offset="0" stop-color="#b4ecf6"/><stop offset="1" stop-color="#7ad0e4"/></linearGradient></defs><path d="M3.8 .8H25L32.200 8V29.800L27.400 32.700L23.600 27.200L21 28.300L18.500 26.500L16 27.700L13.500 26.600L11 28.400L8.500 27.300L6 30.200L3.500 29.200L.8 30.600V3.800Q.8 .8 3.8 .8Z" fill="url(#g27)" stroke="#5aaec4" stroke-width="1.400" stroke-linejoin="round"/><path d="M23.400 1V8.400H32" fill="none" stroke="#5aaec4" stroke-width="1.200"/><path d="M24.600 3V7.300H28.800Z" fill="#dcf6fa"/><text font-size="12" font-weight="bold" fill="#2a8296" stroke="#2a8296" stroke-width=".5" font-family="'Liberation Sans',sans-serif"><tspan x="3.600" y="14.300">1</tspan><tspan x="13.800" y="20.200" font-size="12.400">2</tspan></text><path d="M13.600 6.200L8.800 19.800" stroke="#2a8296" stroke-width="1.900" stroke-linecap="round"/></svg><div class="t n">回调百分比平仓</div><div class="t v">0.0</div></div>
<div class="row" style="top:1132px"><svg class="ic" viewBox="0 0 33 33.500"><defs><linearGradient id="g28" x1="0" y1="0" x2="1" y2="0.700"><stop offset="0" stop-color="#f7f0a8"/><stop offset="1" stop-color="#e9dc72"/></linearGradient></defs><path d="M3.8 .8H25L32.200 8V29.800L27.400 32.700L23.600 27.200L21 28.300L18.500 26.500L16 27.700L13.500 26.600L11 28.400L8.500 27.300L6 30.200L3.500 29.200L.8 30.600V3.800Q.8 .8 3.8 .8Z" fill="url(#g28)" stroke="#c4b352" stroke-width="1.400" stroke-linejoin="round"/><path d="M23.400 1V8.400H32" fill="none" stroke="#c4b352" stroke-width="1.200"/><path d="M24.600 3V7.300H28.800Z" fill="#fbf6cc"/><text x="3.800" y="22.600" font-size="20" font-weight="bold" fill="#7d6c12" stroke="#7d6c12" stroke-width=".45" font-family="'Liberation Sans',sans-serif" textLength="18" lengthAdjust="spacingAndGlyphs">ab</text></svg><div class="t n"><span style="position:relative;top:-2px">—————————————</span></div><div class="t v tl">~~~~~~~~~~</div></div>
<div class="row g" style="top:1171px"><svg class="ic" viewBox="0 0 33 33.500"><defs><linearGradient id="g29" x1="0" y1="0" x2="1" y2="0.700"><stop offset="0" stop-color="#b0f2b6"/><stop offset="1" stop-color="#66dc74"/></linearGradient></defs><path d="M3.8 .8H25L32.200 8V29.800L27.400 32.700L23.600 27.200L21 28.300L18.500 26.500L16 27.700L13.500 26.600L11 28.400L8.500 27.300L6 30.200L3.500 29.200L.8 30.600V3.800Q.8 .8 3.8 .8Z" fill="url(#g29)" stroke="#5cbc68" stroke-width="1.400" stroke-linejoin="round"/><path d="M23.400 1V8.400H32" fill="none" stroke="#5cbc68" stroke-width="1.200"/><path d="M24.600 3V7.300H28.800Z" fill="#d2f8d4"/><path d="M4.800 19.600H7.200L14.800 10.600M18.300 17.200L20.800 19.400L25.300 19.200" stroke="#14801f" stroke-width="2.500" fill="none" stroke-linecap="round" stroke-linejoin="round"/></svg><div class="t n">平保功能开关</div><div class="t v w">false</div></div>
<div class="row" style="top:1210px"><svg class="ic" viewBox="0 0 33 33.500"><defs><linearGradient id="g30" x1="0" y1="0" x2="1" y2="0.700"><stop offset="0" stop-color="#b4ecf6"/><stop offset="1" stop-color="#7ad0e4"/></linearGradient></defs><path d="M3.8 .8H25L32.200 8V29.800L27.400 32.700L23.600 27.200L21 28.300L18.500 26.500L16 27.700L13.500 26.600L11 28.400L8.500 27.300L6 30.200L3.500 29.200L.8 30.600V3.800Q.8 .8 3.8 .8Z" fill="url(#g30)" stroke="#5aaec4" stroke-width="1.400" stroke-linejoin="round"/><path d="M23.400 1V8.400H32" fill="none" stroke="#5aaec4" stroke-width="1.200"/><path d="M24.600 3V7.300H28.800Z" fill="#dcf6fa"/><text font-size="12" font-weight="bold" fill="#2a8296" stroke="#2a8296" stroke-width=".5" font-family="'Liberation Sans',sans-serif"><tspan x="3.600" y="14.300">1</tspan><tspan x="13.800" y="20.200" font-size="12.400">2</tspan></text><path d="M13.600 6.200L8.800 19.800" stroke="#2a8296" stroke-width="1.900" stroke-linecap="round"/></svg><div class="t n">平保启动金额</div><div class="t v">0.0</div></div>
<div class="row g" style="top:1249px"><svg class="ic" viewBox="0 0 33 33.500"><defs><linearGradient id="g31" x1="0" y1="0" x2="1" y2="0.700"><stop offset="0" stop-color="#b4ecf6"/><stop offset="1" stop-color="#7ad0e4"/></linearGradient></defs><path d="M3.8 .8H25L32.200 8V29.800L27.400 32.700L23.600 27.200L21 28.300L18.500 26.500L16 27.700L13.500 26.600L11 28.400L8.500 27.300L6 30.200L3.500 29.200L.8 30.600V3.800Q.8 .8 3.8 .8Z" fill="url(#g31)" stroke="#5aaec4" stroke-width="1.400" stroke-linejoin="round"/><path d="M23.400 1V8.400H32" fill="none" stroke="#5aaec4" stroke-width="1.200"/><path d="M24.600 3V7.300H28.800Z" fill="#dcf6fa"/><text font-size="12" font-weight="bold" fill="#2a8296" stroke="#2a8296" stroke-width=".5" font-family="'Liberation Sans',sans-serif"><tspan x="3.600" y="14.300">1</tspan><tspan x="13.800" y="20.200" font-size="12.400">2</tspan></text><path d="M13.600 6.200L8.800 19.800" stroke="#2a8296" stroke-width="1.900" stroke-linecap="round"/></svg><div class="t n">平保点数</div><div class="t v">0.0</div></div>
<div class="row" style="top:1288px"><svg class="ic" viewBox="0 0 33 33.500"><defs><linearGradient id="g32" x1="0" y1="0" x2="1" y2="0.700"><stop offset="0" stop-color="#f7f0a8"/><stop offset="1" stop-color="#e9dc72"/></linearGradient></defs><path d="M3.8 .8H25L32.200 8V29.800L27.400 32.700L23.600 27.200L21 28.300L18.500 26.500L16 27.700L13.500 26.600L11 28.400L8.500 27.300L6 30.200L3.500 29.200L.8 30.600V3.800Q.8 .8 3.8 .8Z" fill="url(#g32)" stroke="#c4b352" stroke-width="1.400" stroke-linejoin="round"/><path d="M23.400 1V8.400H32" fill="none" stroke="#c4b352" stroke-width="1.200"/><path d="M24.600 3V7.300H28.800Z" fill="#fbf6cc"/><text x="3.800" y="22.600" font-size="20" font-weight="bold" fill="#7d6c12" stroke="#7d6c12" stroke-width=".45" font-family="'Liberation Sans',sans-serif" textLength="18" lengthAdjust="spacingAndGlyphs">ab</text></svg><div class="t n"><span style="position:relative;top:-2px">—————————————</span></div><div class="t v tl">~~~~~~~~~~</div></div>
<div class="row g" style="top:1327px"><svg class="ic" viewBox="0 0 33 33.500"><defs><linearGradient id="g33" x1="0" y1="0" x2="1" y2="0.700"><stop offset="0" stop-color="#b0f2b6"/><stop offset="1" stop-color="#66dc74"/></linearGradient></defs><path d="M3.8 .8H25L32.200 8V29.800L27.400 32.700L23.600 27.200L21 28.300L18.500 26.500L16 27.700L13.500 26.600L11 28.400L8.500 27.300L6 30.200L3.500 29.200L.8 30.600V3.800Q.8 .8 3.8 .8Z" fill="url(#g33)" stroke="#5cbc68" stroke-width="1.400" stroke-linejoin="round"/><path d="M23.400 1V8.400H32" fill="none" stroke="#5cbc68" stroke-width="1.200"/><path d="M24.600 3V7.300H28.800Z" fill="#d2f8d4"/><path d="M4.800 19.600H7.200L14.800 10.600M18.300 17.200L20.800 19.400L25.300 19.200" stroke="#14801f" stroke-width="2.500" fill="none" stroke-linecap="round" stroke-linejoin="round"/></svg><div class="t n">第一笔平仓的订单盈利大于N则不能开新单?..</div><div class="t v w">true</div></div>
<div class="row" style="top:1366px"><svg class="ic" viewBox="0 0 33 33.500"><defs><linearGradient id="g34" x1="0" y1="0" x2="1" y2="0.700"><stop offset="0" stop-color="#b4ecf6"/><stop offset="1" stop-color="#7ad0e4"/></linearGradient></defs><path d="M3.8 .8H25L32.200 8V29.800L27.400 32.700L23.600 27.200L21 28.300L18.500 26.500L16 27.700L13.500 26.600L11 28.400L8.500 27.300L6 30.200L3.500 29.200L.8 30.600V3.800Q.8 .8 3.8 .8Z" fill="url(#g34)" stroke="#5aaec4" stroke-width="1.400" stroke-linejoin="round"/><path d="M23.400 1V8.400H32" fill="none" stroke="#5aaec4" stroke-width="1.200"/><path d="M24.600 3V7.300H28.800Z" fill="#dcf6fa"/><text font-size="12" font-weight="bold" fill="#2a8296" stroke="#2a8296" stroke-width=".5" font-family="'Liberation Sans',sans-serif"><tspan x="3.600" y="14.300">1</tspan><tspan x="13.800" y="20.200" font-size="12.400">2</tspan></text><path d="M13.600 6.200L8.800 19.800" stroke="#2a8296" stroke-width="1.900" stroke-linecap="round"/></svg><div class="t n">当天第一笔平仓的订单盈利大于N则不能开?..</div><div class="t v">1000.0</div></div>
<div class="row g" style="top:1405px"><svg class="ic" viewBox="0 0 33 33.500"><defs><linearGradient id="g35" x1="0" y1="0" x2="1" y2="0.700"><stop offset="0" stop-color="#f7f0a8"/><stop offset="1" stop-color="#e9dc72"/></linearGradient></defs><path d="M3.8 .8H25L32.200 8V29.800L27.400 32.700L23.600 27.200L21 28.300L18.500 26.500L16 27.700L13.500 26.600L11 28.400L8.500 27.300L6 30.200L3.500 29.200L.8 30.600V3.800Q.8 .8 3.8 .8Z" fill="url(#g35)" stroke="#c4b352" stroke-width="1.400" stroke-linejoin="round"/><path d="M23.400 1V8.400H32" fill="none" stroke="#c4b352" stroke-width="1.200"/><path d="M24.600 3V7.300H28.800Z" fill="#fbf6cc"/><text x="3.800" y="22.600" font-size="20" font-weight="bold" fill="#7d6c12" stroke="#7d6c12" stroke-width=".45" font-family="'Liberation Sans',sans-serif" textLength="18" lengthAdjust="spacingAndGlyphs">ab</text></svg><div class="t n"><span style="position:relative;top:-2px">—————————————</span></div><div class="t v tl">~~~~~~~~~~</div></div>
<div class="row" style="top:1444px"><svg class="ic" viewBox="0 0 33 33.500"><defs><linearGradient id="g36" x1="0" y1="0" x2="1" y2="0.700"><stop offset="0" stop-color="#f7f0a8"/><stop offset="1" stop-color="#e9dc72"/></linearGradient></defs><path d="M3.8 .8H25L32.200 8V29.800L27.400 32.700L23.600 27.200L21 28.300L18.500 26.500L16 27.700L13.500 26.600L11 28.400L8.500 27.300L6 30.200L3.500 29.200L.8 30.600V3.800Q.8 .8 3.8 .8Z" fill="url(#g36)" stroke="#c4b352" stroke-width="1.400" stroke-linejoin="round"/><path d="M23.400 1V8.400H32" fill="none" stroke="#c4b352" stroke-width="1.200"/><path d="M24.600 3V7.300H28.800Z" fill="#fbf6cc"/><text x="3.800" y="22.600" font-size="20" font-weight="bold" fill="#7d6c12" stroke="#7d6c12" stroke-width=".45" font-family="'Liberation Sans',sans-serif" textLength="18" lengthAdjust="spacingAndGlyphs">ab</text></svg><div class="t n">允许交易品种（英文逗号隔开）</div><div class="t v" style="letter-spacing:-.2px">XAUUSDm,USTEC_x100m</div></div>
<div id="colsep"></div>
<div id="sb"><div id="sb-thumb"></div><svg style="left:0;top:0;width:34px;height:34px" viewBox="0 0 34 34"><path d="M11 21.500L17 15.500L23 21.500" stroke="#505050" stroke-width="2.400" fill="none"/></svg><svg style="left:0;top:1445px;width:34px;height:34px" viewBox="0 0 34 34"><path d="M11 14L17 20L23 14" stroke="#505050" stroke-width="2.400" fill="none"/></svg></div>
</div>
<div class="btn" style="left:1140px;top:1477px;width:243px">加载(L)</div>
<div class="btn" style="left:1140px;top:1554px;width:243px">保存(S)</div>
<div class="btn" style="left:841px;top:1624px;width:174px;border:2px solid #1873bd;line-height:48px">确定</div>
<div class="btn" style="left:1030px;top:1624px;width:174px">取消</div>
<div class="btn" style="left:1219px;top:1624px;width:174px">重设</div>
</div>
<div id="taskbar">
<svg style="left:1411px;top:26px;width:38px;height:30px" viewBox="0 0 38 30"><path d="M6 4.500H34.500V21.500H9M22 21.500V27M14 27.500H30M5.500 6V28" stroke="#fff" stroke-width="1.700" fill="none"/><rect x="2" y="4" width="7" height="7" fill="#141414" stroke="#fff" stroke-width="1.600"/><rect x="4.500" y="6.500" width="2" height="2" fill="#fff"/></svg>
<div class="t" style="left:1460px;top:22px;font-size:31px;line-height:40px;height:40px">英</div>
<div class="t" style="left:1540px;top:4px;font-size:25px;letter-spacing:-0.2px">23:20</div>
<div class="t" style="left:1505px;top:42px;font-size:25px;letter-spacing:0.6px">2025/10/15</div>
<svg style="left:1664px;top:20px;width:60px;height:48px" viewBox="0 0 60 48"><path d="M4 4H36V30H19L19 37L12 30H4Z" fill="#fff"/><path d="M9 11.500H31M9 17.500H31M9 23.500H31" stroke="#141414" stroke-width="2"/><circle cx="34" cy="33" r="15" fill="#3a3a3a" stroke="#8a8a8a" stroke-width="2"/><text x="28" y="43" font-size="26" font-weight="bold" fill="#fff" font-family="'Liberation Sans',sans-serif">1</text></svg>
</div>
<svg style="left:1210px;top:1640px;width:100px;height:110px;filter:drop-shadow(2px 2px 0.6px rgba(0,0,0,.75))" viewBox="0 0 100 110"><path d="M36 26.500H53Q73.500 26.500 73.500 47V62Q73.500 82.500 53 82.500H50L41.500 92.500L43 82.500H36Q15.500 82.500 15.500 62V47Q15.500 26.500 36 26.500Z" fill="#fff"/><path d="M57.500 37Q47 35 45 44L35.500 81" stroke="#1c1c1c" stroke-width="2.3" fill="none" stroke-dasharray="26 9 8 40"/><path d="M31 55H41M50 55H57" stroke="#1c1c1c" stroke-width="2.3" fill="none"/></svg>
<div class="t" id="wm" style="left:1291px;top:1656px;font-size:60px;line-height:72px;height:72px;color:#fff;font-weight:350;letter-spacing:.8px;text-shadow:2px 2px 1px rgba(0,0,0,.9),1px 1px 0 rgba(0,0,0,.8)"><span style="position:relative;display:inline-block;font-weight:400;font-size:57px;left:-1px;margin-right:1.5px">@</span>朱老师丨乐诗</div>
</body></html>
